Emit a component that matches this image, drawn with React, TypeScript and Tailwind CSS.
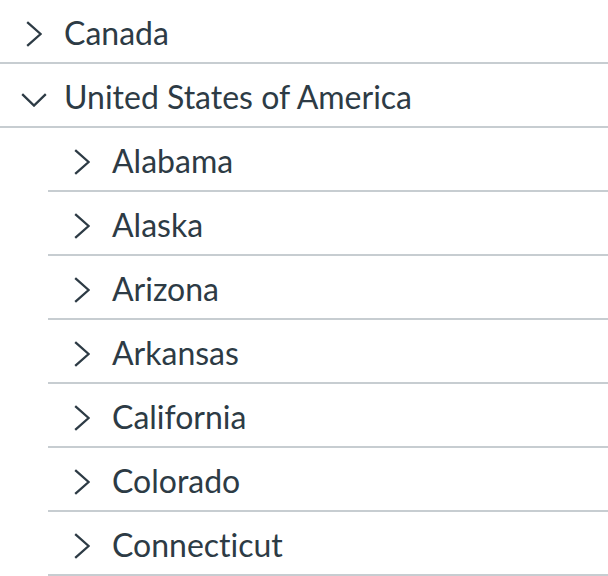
import React from "react";

type Node = { label: string; open?: boolean; children?: Node[] };

const tree: Node[] = [
  { label: "Canada" },
  {
    label: "United States of America",
    open: true,
    children: [
      { label: "Alabama" },
      { label: "Alaska" },
      { label: "Arizona" },
      { label: "Arkansas" },
      { label: "California" },
      { label: "Colorado" },
      { label: "Connecticut" },
    ],
  },
];

function Chevron({ open }: { open?: boolean }) {
  return open ? (
    <svg width="26" height="14" viewBox="0 0 26 14" className="mt-[10px] shrink-0">
      <polyline points="1.2,1.2 13,12.6 24.8,1.2" fill="none" stroke="#2D3B45" strokeWidth="2.3" />
    </svg>
  ) : (
    <svg width="16" height="26" viewBox="0 0 16 26" className="mt-[6px] shrink-0">
      <polyline points="1.2,1.2 14.6,13 1.2,24.8" fill="none" stroke="#2D3B45" strokeWidth="2.3" />
    </svg>
  );
}

function Row({ node }: { node: Node }) {
  return (
    <div className="flex h-[64px] items-center border-b-2 border-[#C7CDD1]">
      <div className="ml-[16px] flex w-[35px] shrink-0 justify-center">
        <Chevron open={node.open} />
      </div>
      <span className="ml-[13px] whitespace-nowrap pt-[3px] text-[32px] leading-none text-[#2D3B45] [font-variant-ligatures:none]">
        {node.label}
      </span>
    </div>
  );
}

export default function App() {
  return (
    <div className="h-[576px] w-[608px] overflow-hidden bg-white" style={{ fontFamily: "Lato, sans-serif" }}>
      {tree.map((n) => (
        <div key={n.label}>
          <Row node={n} />
          {n.open && n.children && (
            <div className="ml-[48px]">
              {n.children.map((c) => (
                <Row key={c.label} node={c} />
              ))}
            </div>
          )}
        </div>
      ))}
    </div>
  );
}
